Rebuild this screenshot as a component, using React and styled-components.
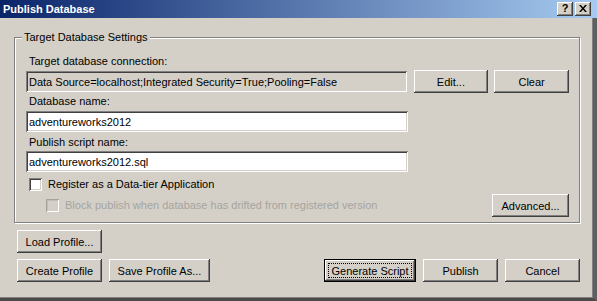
import styled, { createGlobalStyle, css } from "styled-components";

const GlobalStyle = createGlobalStyle`
  html, body {
    margin: 0;
    padding: 0;
    background: #d4d0c8;
  }
  body {
    font-family: "Liberation Sans", Arial, sans-serif;
    font-size: 11px;
    color: #000;
  }
`;

// classic 3d edges
const raised = css`
  box-shadow: inset -1px -1px 0 #404040, inset 1px 1px 0 #ffffff,
    inset -2px -2px 0 #808080, inset 2px 2px 0 #d4d0c8;
`;

const sunken = css`
  box-shadow: inset 1px 1px 0 #808080, inset -1px -1px 0 #ffffff,
    inset 2px 2px 0 #404040, inset -2px -2px 0 #d4d0c8;
`;

const Window = styled.div`
  width: 597px;
  height: 301px;
  display: flex;
  flex-direction: column;
  background: #d4d0c8;
  overflow: hidden;
`;

const TitleBar = styled.div`
  height: 18px;
  flex: none;
  display: flex;
  align-items: center;
  padding: 0 6px 0 3px;
  background: linear-gradient(to right, #0a246a, #a6caf0);
`;

const Title = styled.span`
  flex: 1;
  color: #fff;
  font-weight: bold;
  font-size: 11px;
  line-height: 13px;
`;

const CaptionButtons = styled.div`
  display: flex;
  gap: 2px;
`;

const CaptionButton = styled.div`
  width: 16px;
  height: 14px;
  box-sizing: border-box;
  display: flex;
  align-items: center;
  justify-content: center;
  background: #d4d0c8;
  font-weight: bold;
  font-size: 11px;
  line-height: 11px;
  padding-bottom: 1px;
  ${raised}
`;

const Frame = styled.div`
  flex: 1;
  display: flex;
  flex-direction: column;
  padding: 13px 13px 0 14px;
  border-right: 4px solid #5f5f5f;
  border-bottom: 3px solid #4a4a4a;
  box-shadow: inset -1px -1px 0 #808080;
`;

const Group = styled.fieldset`
  margin: 0;
  padding: 0;
  min-width: 0;
  border: 1px solid #808080;
  box-shadow: inset 1px 1px 0 #fff, 1px 1px 0 #fff;
`;

const Legend = styled.legend`
  margin-left: 7px;
  padding: 0 2px;
  line-height: 13px;
  background: #d4d0c8;
`;

const GroupBody = styled.div`
  display: flex;
  flex-direction: column;
  padding: 11px 10px 5px 11px;
`;

const FieldLabel = styled.div`
  margin: ${(p) => p.$top || 0}px 0 0 3px;
  line-height: 13px;
`;

const Row = styled.div`
  display: flex;
  align-items: center;
  gap: ${(p) => p.$gap || 0}px;
  margin-top: ${(p) => p.$top || 0}px;
`;

const TextBox = styled.input`
  width: 382px;
  height: 21px;
  box-sizing: border-box;
  border: none;
  outline: none;
  margin: 0;
  padding: 0 2px 0 3px;
  font: inherit;
  color: #000;
  background: ${(p) => (p.readOnly ? "#d4d0c8" : "#fff")};
  ${sunken}
`;

const Button = styled.button`
  position: relative;
  width: ${(p) => p.$w || 75}px;
  height: 23px;
  box-sizing: border-box;
  margin: 0;
  padding: 0;
  border: ${(p) => (p.$default ? "1px solid #000" : "none")};
  background: #d4d0c8;
  font: inherit;
  color: #000;
  ${raised}

  ${(p) =>
    p.$default &&
    css`
      &::after {
        content: "";
        position: absolute;
        inset: 3px;
        border: 1px dotted #000;
      }
    `}
`;

const CheckRow = styled.label`
  display: flex;
  align-items: center;
  gap: 6px;
  margin-left: ${(p) => p.$indent || 3}px;
  line-height: 13px;
  color: ${(p) => (p.$disabled ? "#a6a49f" : "#000")};
`;

const Box = styled.span`
  width: 13px;
  height: 13px;
  flex: none;
  box-sizing: border-box;
  background: ${(p) => (p.$disabled ? "#d4d0c8" : "#fff")};
  box-shadow: ${(p) =>
    p.$disabled
      ? "inset 1px 1px 0 #a6a49f, inset -1px -1px 0 #fff, inset 2px 2px 0 #c0bdb6"
      : "inset 1px 1px 0 #808080, inset -1px -1px 0 #fff, inset 2px 2px 0 #404040, inset -2px -2px 0 #d4d0c8"};
`;

const Spacer = styled.div`
  flex: 1;
`;

const Footer = styled.div`
  display: flex;
  flex-direction: column;
  padding: 0 0 0 3px;
`;

export default function App() {
  return (
    <>
      <GlobalStyle />
      <Window>
        <TitleBar>
          <Title>Publish Database</Title>
          <CaptionButtons>
            <CaptionButton>?</CaptionButton>
            <CaptionButton>
              <svg width="8" height="7" viewBox="0 0 8 7">
                <path
                  d="M0 0h2l2 2.5L6 0h2L5 3.5 8 7H6L4 4.5 2 7H0l3-3.5z"
                  fill="#000"
                />
              </svg>
            </CaptionButton>
          </CaptionButtons>
        </TitleBar>

        <Frame>
          <Group>
            <Legend>Target Database Settings</Legend>
            <GroupBody>
              <FieldLabel>Target database connection:</FieldLabel>
              <Row $top={2}>
                <TextBox
                  readOnly
                  value="Data Source=localhost;Integrated Security=True;Pooling=False"
                />
                <Button style={{ marginLeft: 7 }}>Edit...</Button>
                <Button style={{ marginLeft: 6 }}>Clear</Button>
              </Row>

              <FieldLabel $top={2}>Database name:</FieldLabel>
              <Row $top={3}>
                <TextBox defaultValue="adventureworks2012" />
              </Row>

              <FieldLabel $top={4}>Publish script name:</FieldLabel>
              <Row $top={2}>
                <TextBox defaultValue="adventureworks2012.sql" />
              </Row>

              <Row $top={6}>
                <CheckRow>
                  <Box />
                  Register as a Data-tier Application
                </CheckRow>
              </Row>
              <Row $top={3}>
                <CheckRow $indent={20} $disabled>
                  <Box $disabled />
                  Block publish when database has drifted from registered
                  version
                </CheckRow>
                <Spacer />
                <Button $w={77}>Advanced...</Button>
              </Row>
            </GroupBody>
          </Group>

          <Footer>
            <Row $top={7}>
              <Button $w={85}>Load Profile...</Button>
            </Row>
            <Row $top={6} $gap={7}>
              <Button $w={85}>Create Profile</Button>
              <Button $w={101}>Save Profile As...</Button>
              <Spacer />
              <Button $w={92} $default>
                Generate Script
              </Button>
              <Button>Publish</Button>
              <Button>Cancel</Button>
            </Row>
          </Footer>
        </Frame>
      </Window>
    </>
  );
}
